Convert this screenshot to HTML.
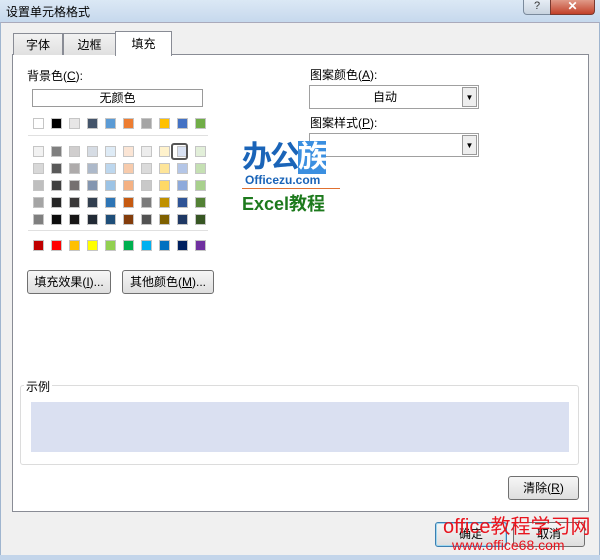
<!DOCTYPE html>
<html><head><meta charset="utf-8"><style>
*{margin:0;padding:0;box-sizing:border-box}
body{width:600px;height:560px;position:relative;overflow:hidden;background:#f0f0f0;font-family:"Liberation Sans","Noto Sans CJK SC",sans-serif;font-size:12px;color:#000}
.a{position:absolute}
.title{left:0;top:0;width:600px;height:24px;background:linear-gradient(#dbe8f5,#c4d7ec)}
.btn{position:absolute;border:1px solid #707070;border-radius:3px;background:linear-gradient(#f6f6f6,#dedede);text-align:center;font-size:12px}
.c{position:absolute;width:11px;height:11px;border:1px solid #c5c5c5}
</style></head><body>
<div class="a title"></div>
<div class="a" style="left:6px;top:3px;font-size:12px">设置单元格格式</div>
<div class="a" style="left:523px;top:0;width:28px;height:15px;border:1px solid #7a8a9c;border-top:0;border-radius:0 0 0 4px;background:linear-gradient(#e6edf5,#c8d3df);font-size:11px;text-align:center;line-height:13px;color:#333">?</div>
<div class="a" style="left:550px;top:0;width:45px;height:15px;border:1px solid #7a3a30;border-top:0;border-radius:0 0 4px 0;background:linear-gradient(#e09a88,#c2412a);color:#fff;font-weight:bold;text-align:center;line-height:13px">✕</div>
<div class="a" style="left:0;top:22px;width:600px;height:538px;background:#f0f0f0;border:1px solid #9fb5cf;border-top:1px solid #aab"></div>
<div class="a" style="left:0;top:555px;width:600px;height:5px;background:#c3d5ea"></div>
<div class="a" style="left:12px;top:54px;width:577px;height:458px;background:#fff;border:1px solid #898c95"></div>
<div class="a" style="left:13px;top:33px;width:50px;height:22px;border:1px solid #898c95;border-bottom:0;background:linear-gradient(#f2f2f2,#e0e0e0);text-align:center;line-height:22px">字体</div>
<div class="a" style="left:63px;top:33px;width:53px;height:22px;border:1px solid #898c95;border-bottom:0;background:linear-gradient(#f2f2f2,#e0e0e0);text-align:center;line-height:22px">边框</div>
<div class="a" style="left:115px;top:31px;width:57px;height:25px;border:1px solid #898c95;border-bottom:0;background:#fff;text-align:center;line-height:24px">填充</div>
<div class="a" style="left:27px;top:67px">背景色(<u>C</u>):</div>
<div class="a" style="left:32px;top:89px;width:171px;height:18px;border:1px solid #9a9a9a;text-align:center;line-height:16px">无颜色</div>
<div id="g"></div>
<div class="a" style="left:28px;top:135px;width:180px;height:1px;background:#e0e0e0"></div>
<div class="a" style="left:28px;top:230px;width:180px;height:1px;background:#e0e0e0"></div>
<div class="btn" style="left:27px;top:270px;width:84px;height:24px;line-height:22px">填充效果(<u>I</u>)...</div>
<div class="btn" style="left:122px;top:270px;width:92px;height:24px;line-height:22px">其他颜色(<u>M</u>)...</div>
<div class="a" style="left:310px;top:66px">图案颜色(<u>A</u>):</div>
<div class="a" style="left:309px;top:85px;width:170px;height:24px;border:1px solid #a0a0a0;text-align:center;line-height:22px;padding-right:18px">自动</div>
<div class="a" style="left:462px;top:87px;width:15px;height:20px;border:1px solid #999;background:#eee;font-size:8px;text-align:center;line-height:20px">▼</div>
<div class="a" style="left:310px;top:114px">图案样式(<u>P</u>):</div>
<div class="a" style="left:309px;top:133px;width:170px;height:24px;border:1px solid #a0a0a0"></div>
<div class="a" style="left:462px;top:135px;width:15px;height:20px;border:1px solid #999;background:#eee;font-size:8px;text-align:center;line-height:20px">▼</div>
<div class="a" style="left:242px;top:139px;font-size:30px;line-height:38px;font-weight:bold;color:#1a64b8;letter-spacing:-2px">办公<span style="background:#3b8fe0;color:#fff">族</span></div>
<div class="a" style="left:245px;top:173px;font-size:12px;font-weight:bold;color:#1a64b8">Officezu.com</div>
<div class="a" style="left:242px;top:188px;width:98px;height:1px;background:#e07030"></div>
<div class="a" style="left:242px;top:190px;font-size:18px;font-weight:bold;color:#1d7a1d">Excel教程</div>
<div class="a" style="left:20px;top:385px;width:559px;height:80px;border:1px solid #dcdcdc;border-radius:3px"></div>
<div class="a" style="left:24px;top:378px;background:#fff;padding:0 2px">示例</div>
<div class="a" style="left:31px;top:402px;width:538px;height:50px;background:#dae0f1"></div>
<div class="btn" style="left:508px;top:476px;width:71px;height:24px;line-height:22px">清除(<u>R</u>)</div>
<div class="btn" style="left:435px;top:522px;width:72px;height:25px;line-height:23px;border-color:#3c7fb1;box-shadow:inset 0 0 0 1px #a0d8f0">确定</div>
<div class="btn" style="left:513px;top:522px;width:72px;height:25px;line-height:23px">取消</div>
<div class="a" style="left:443px;top:510px;font-size:20px;color:#e8141e">office教程学习网</div>
<div class="a" style="left:452px;top:537px;font-size:14px;color:#e8141e">www.office68.com</div>
<script>
var top1=["#fff","#000","#e7e6e6","#44546a","#5b9bd5","#ed7d31","#a5a5a5","#ffc000","#4472c4","#70ad47"];
var rows=[["#f2f2f2","#7f7f7f","#d0cece","#d6dce4","#deebf6","#fbe5d5","#ededed","#fff2cc","#d9e2f3","#e2efd9"],
["#d8d8d8","#595959","#aeabab","#adb9ca","#bdd7ee","#f7cbac","#dbdbdb","#fee599","#b4c6e7","#c5e0b3"],
["#bfbfbf","#3f3f3f","#757070","#8496b0","#9cc3e5","#f4b183","#c9c9c9","#ffd965","#8eaadb","#a8d08d"],
["#a5a5a5","#262626","#3a3838","#323f4f","#2e75b5","#c55a11","#7b7b7b","#bf9000","#2f5496","#538135"],
["#7f7f7f","#0c0c0c","#171616","#222a35","#1e4e79","#833c0b","#525252","#7f6000","#1f3864","#375623"]];
var std=["#c00000","#ff0000","#ffc000","#ffff00","#92d050","#00b050","#00b0f0","#0070c0","#002060","#7030a0"];
var h="";
function add(c,x,y){h+='<div class="c" style="left:'+x+'px;top:'+y+'px;background:'+c+'"></div>';}
top1.forEach(function(c,i){add(c,33+i*18,118)});
var ys=[146,163,180,197,214];
rows.forEach(function(r,j){r.forEach(function(c,i){add(c,33+i*18,ys[j])})});
std.forEach(function(c,i){add(c,33+i*18,240)});
h+='<div class="a" style="left:171px;top:143px;width:17px;height:17px;border:2px solid #555;border-radius:3px"></div>';
document.getElementById("g").innerHTML=h;
</script>
</body></html>
